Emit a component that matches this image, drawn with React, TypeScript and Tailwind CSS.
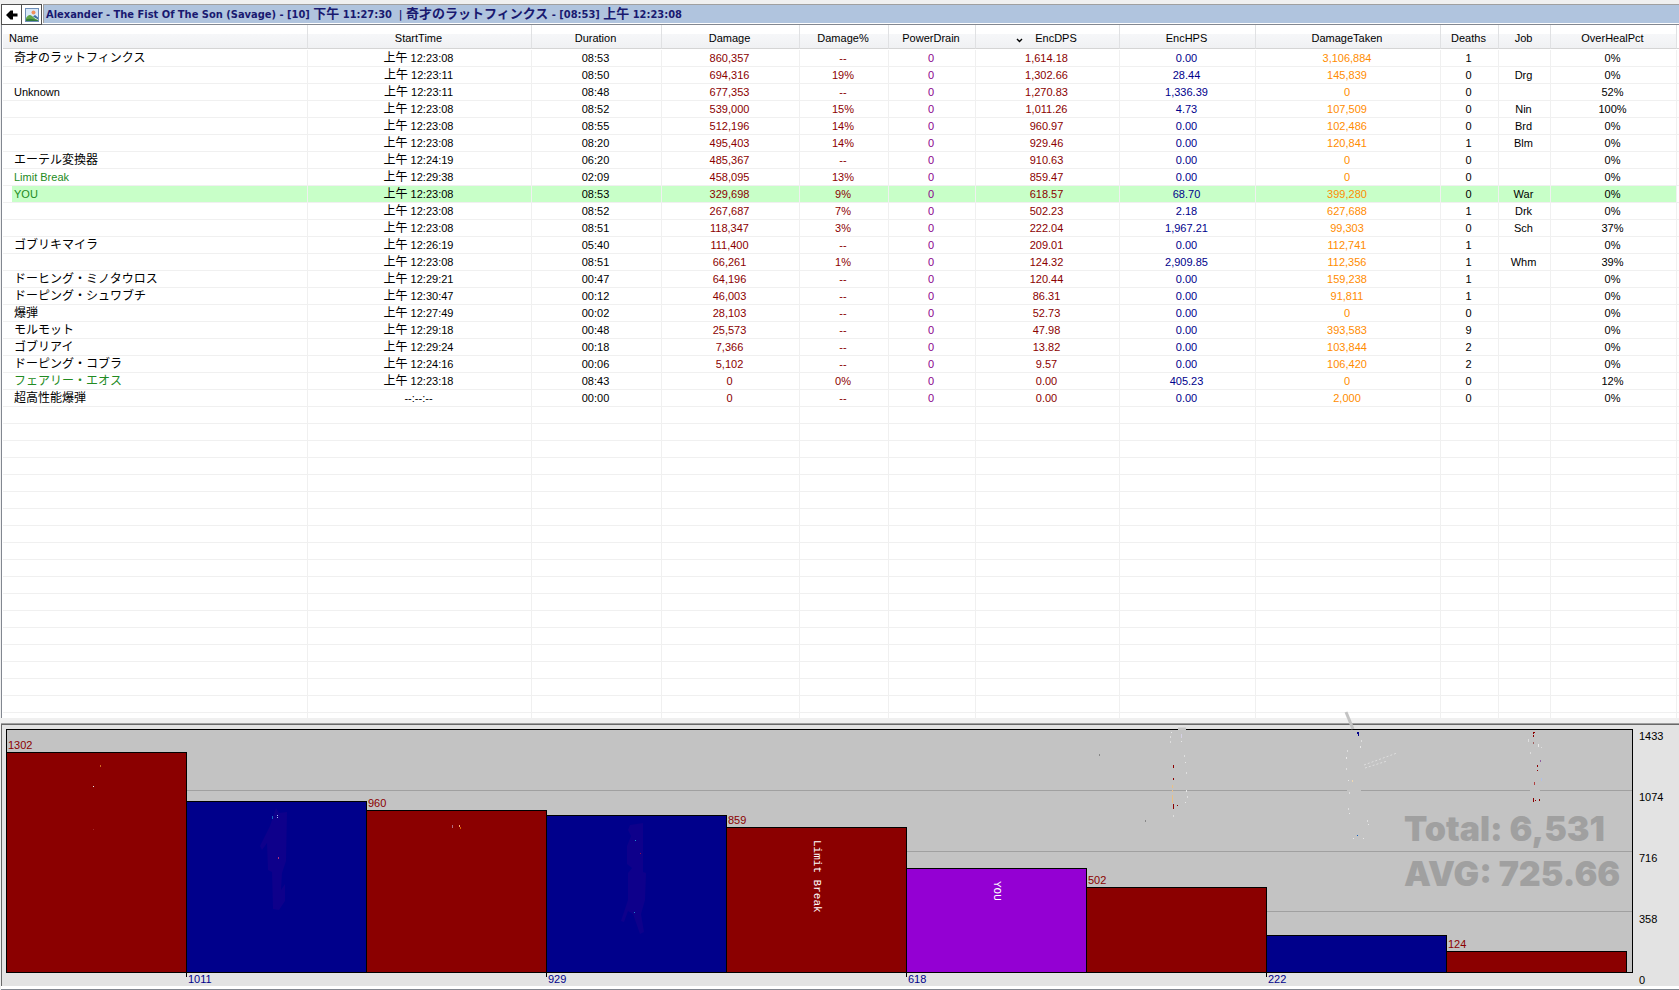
import React from "react";

type Row = {
  name: string;
  start: string;
  duration: string;
  damage: string;
  pct: string;
  dps: string;
  hps: string;
  taken: string;
  deaths: string;
  job: string;
  overheal: string;
  ally?: boolean;
  active?: boolean;
};

const raw: string[] = [
  "奇才のラットフィンクス|上午 12:23:08|08:53|860,357|--|1,614.18|0.00|3,106,884|1||0%",
  "|上午 12:23:11|08:50|694,316|19%|1,302.66|28.44|145,839|0|Drg|0%",
  "Unknown|上午 12:23:11|08:48|677,353|--|1,270.83|1,336.39|0|0||52%",
  "|上午 12:23:08|08:52|539,000|15%|1,011.26|4.73|107,509|0|Nin|100%",
  "|上午 12:23:08|08:55|512,196|14%|960.97|0.00|102,486|0|Brd|0%",
  "|上午 12:23:08|08:20|495,403|14%|929.46|0.00|120,841|1|Blm|0%",
  "エーテル変換器|上午 12:24:19|06:20|485,367|--|910.63|0.00|0|0||0%",
  "Limit Break|上午 12:29:38|02:09|458,095|13%|859.47|0.00|0|0||0%",
  "YOU|上午 12:23:08|08:53|329,698|9%|618.57|68.70|399,280|0|War|0%",
  "|上午 12:23:08|08:52|267,687|7%|502.23|2.18|627,688|1|Drk|0%",
  "|上午 12:23:08|08:51|118,347|3%|222.04|1,967.21|99,303|0|Sch|37%",
  "ゴブリキマイラ|上午 12:26:19|05:40|111,400|--|209.01|0.00|112,741|1||0%",
  "|上午 12:23:08|08:51|66,261|1%|124.32|2,909.85|112,356|1|Whm|39%",
  "ドーヒング・ミノタウロス|上午 12:29:21|00:47|64,196|--|120.44|0.00|159,238|1||0%",
  "ドーピング・シュワブチ|上午 12:30:47|00:12|46,003|--|86.31|0.00|91,811|1||0%",
  "爆弾|上午 12:27:49|00:02|28,103|--|52.73|0.00|0|0||0%",
  "モルモット|上午 12:29:18|00:48|25,573|--|47.98|0.00|393,583|9||0%",
  "ゴブリアイ|上午 12:29:24|00:18|7,366|--|13.82|0.00|103,844|2||0%",
  "ドーピング・コブラ|上午 12:24:16|00:06|5,102|--|9.57|0.00|106,420|2||0%",
  "フェアリー・エオス|上午 12:23:18|08:43|0|0%|0.00|405.23|0|0||12%",
  "超高性能爆弾|--:--:--|00:00|0|--|0.00|0.00|2,000|0||0%",
];

const allies = ["Limit Break", "YOU", "フェアリー・エオス"];

const rows: Row[] = raw.map((line) => {
  const [name, start, duration, damage, pct, dps, hps, taken, deaths, job, overheal] = line.split("|");
  return {
    name, start, duration, damage, pct, dps, hps, taken, deaths, job, overheal,
    ally: allies.includes(name),
    active: name === "YOU",
  };
});

const columns = [
  { label: "Name", width: "w-[305px]" },
  { label: "StartTime", width: "w-[224px]" },
  { label: "Duration", width: "w-[130px]" },
  { label: "Damage", width: "w-[138px]" },
  { label: "Damage%", width: "w-[89px]" },
  { label: "PowerDrain", width: "w-[87px]" },
  { label: "EncDPS", width: "w-[144px]", sorted: true },
  { label: "EncHPS", width: "w-[136px]" },
  { label: "DamageTaken", width: "w-[185px]" },
  { label: "Deaths", width: "w-[58px]" },
  { label: "Job", width: "w-[52px]" },
  { label: "OverHealPct", width: "w-[126px]" },
];

const emptyRows = Array.from({ length: 19 }, (_, i) => i);

/** Splits a string so that CJK runs are set in their own, slightly larger face. */
function Mixed({ text, size = "text-[12px]" }: { text: string; size?: string }) {
  const parts = text.split(/([\u3000-\u9fff]+)/);
  return (
    <>
      {parts.map((part, i) =>
        i % 2 === 1 ? (
          <span key={i} className={`font-['Noto_Sans_CJK_JP',sans-serif] leading-none ${size}`}>{part}</span>
        ) : (
          part
        ),
      )}
    </>
  );
}

function BackIcon() {
  return (
    <svg width="12" height="10" viewBox="0 0 12 10" aria-hidden="true">
      <path d="M0 5 L4.5 0.5 H7 V3.5 H11.5 V6.5 H7 V9.5 H4.5 Z" fill="#000" />
    </svg>
  );
}

function PictureIcon() {
  return (
    <svg width="14" height="14" viewBox="0 0 14 14" aria-hidden="true">
      <rect x="0.5" y="0.5" width="13" height="13" fill="#fff" stroke="#6f8fb8" />
      <rect x="1" y="1" width="12" height="9" fill="#d9e9fa" />
      <circle cx="8.5" cy="4.5" r="2" fill="#f0905a" />
      <path d="M1 10 C3 7 5 6 7 8 C9 10 11 11 13 12 V13 H1 Z" fill="#5fa548" />
      <path d="M1 11.5 C4 10 8 11 13 12.5 V13 H1 Z" fill="#2f7a3c" />
      <path d="M8 8.5 L10 7 L13 9.5 V11.5 Z" fill="#3d6f9f" />
    </svg>
  );
}

function Cell({ value, color, active }: { value: string; color: string; active?: boolean }) {
  return (
    <td className={`h-[17px] border-r border-b border-[#f0f0f0] p-0 pt-px pr-[2px] text-center ${color} ${active ? "bg-[#c8ffc8]" : ""}`}>
      <Mixed text={value} />
    </td>
  );
}

function CombatantTable() {
  return (
    <div className="min-h-0 flex-1 overflow-hidden border-l border-[#828790] bg-white pl-px">
      <table className="w-full table-fixed border-separate border-spacing-0 font-['Liberation_Sans','Noto_Sans_CJK_JP',sans-serif] text-[11px] leading-[15px] whitespace-nowrap text-black">
        <colgroup>
          {columns.map((c) => (
            <col key={c.label} className={c.width} />
          ))}
          <col className="w-[2px]" />
        </colgroup>
        <thead>
          <tr>
            {columns.map((c, i) => (
              <th key={c.label} scope="col" className="h-[25px] p-0 pb-px font-normal">
                <button
                  type="button"
                  className={`flex h-6 w-full items-center border-r border-b border-r-[#e0e1e3] border-b-[#d5d5d5] bg-linear-to-b from-white from-40% via-[#f6f7f9] via-40% to-[#f0f1f3] pt-[3px] pr-[2px] ${i === 0 ? "justify-start pl-[6px]" : "justify-center"}`}
                >
                  {c.sorted && (
                    <svg className="mt-1 mr-3" width="7" height="5" viewBox="0 0 7 5" aria-hidden="true">
                      <path d="M1 1 L3.5 3.5 L6 1" fill="none" stroke="#000" strokeWidth="1.4" />
                    </svg>
                  )}
                  {c.label}
                </button>
              </th>
            ))}
            <td className="p-0 pb-px">
              <div className="h-6 border-b border-[#d5d5d5]" />
            </td>
          </tr>
        </thead>
        <tbody>
          {rows.map((r, i) => (
            <tr key={i}>
              <td className="h-[17px] border-r border-b border-[#f0f0f0] p-0 pl-[9px]">
                <div className={`h-4 pt-px pl-[2px] ${r.active ? "bg-[#c8ffc8]" : ""} ${r.ally ? "text-[#228b22]" : ""}`}>
                  <Mixed text={r.name} />
                </div>
              </td>
              <Cell value={r.start} color="text-black" active={r.active} />
              <Cell value={r.duration} color="text-black" active={r.active} />
              <Cell value={r.damage} color="text-[#8b0000]" active={r.active} />
              <Cell value={r.pct} color="text-[#8b0000]" active={r.active} />
              <Cell value="0" color="text-[#8b008b]" active={r.active} />
              <Cell value={r.dps} color="text-[#8b0000]" active={r.active} />
              <Cell value={r.hps} color="text-[#00008b]" active={r.active} />
              <Cell value={r.taken} color="text-[#ff8c00]" active={r.active} />
              <Cell value={r.deaths} color="text-black" active={r.active} />
              <Cell value={r.job} color="text-black" active={r.active} />
              <Cell value={r.overheal} color="text-black" active={r.active} />
              <td className="border-b border-[#f0f0f0] p-0" />
            </tr>
          ))}
          {emptyRows.map((n) => (
            <tr key={`empty-${n}`}>
              {columns.map((c) => (
                <td key={c.label} className="h-[17px] border-r border-b border-[#f0f0f0] p-0" />
              ))}
              <td className="border-b border-[#f0f0f0] p-0" />
            </tr>
          ))}
        </tbody>
      </table>
    </div>
  );
}

type Bar = { value: number; color: string; label?: string; smudge?: string };

const MAX = 1433;

const bars: Bar[] = [
  { value: 1302, color: "bg-[#8b0000]" },
  {
    value: 1011,
    color: "bg-[#00008b]",
    smudge: "M89 6 L92 11 L100 10 L99 59 L95 71 L94 88 L98 82 L98 99 L92 108 L86 107 L85 70 L81 68 L80 41 L75 48 L73 44 L83 24 Z",
  },
  { value: 960, color: "bg-[#8b0000]" },
  {
    value: 929,
    color: "bg-[#00008b]",
    smudge: "M83 9 L96 7 L96 56 L99 57 L98 84 L94 98 L97 116 L93 118 L86 98 L81 95 L77 106 L74 105 L81 84 L81 57 L85 52 L80 48 L80 30 L84 20 L81 14 Z",
  },
  { value: 859, color: "bg-[#8b0000]", label: "Limit Break" },
  { value: 618, color: "bg-[#9400d3]", label: "YOU" },
  { value: 502, color: "bg-[#8b0000]" },
  { value: 222, color: "bg-[#00008b]" },
  { value: 124, color: "bg-[#8b0000]" },
];

/* x, y, height, colour of the stray marks, in plot coordinates */
const specks: [number, number, number, string][] = [
  [93, 35, 2, "#d2691e"], [86, 56, 1, "#e8e8e8"], [86, 99, 1, "#a52a2a"],
  [265, 86, 3, "#1565c0"], [270, 85, 1, "#9fb8f0"], [270, 87, 1, "#9fb8f0"], [271, 127, 2, "#b03080"],
  [445, 95, 3, "#b06a80"], [452, 95, 2, "#ffb070"], [453, 97, 2, "#e06000"],
  [628, 110, 1, "#2090d0"], [633, 123, 1, "#901050"], [627, 182, 1, "#2080d0"],
  [1092, 24, 2, "#888"], [1138, 90, 2, "#888"],
  [1166, 35, 3, "#8b0000"], [1166, 48, 2, "#8b0000"], [1165, 55, 3, "#e8c088"], [1165, 60, 2, "#e8c088"], [1165, 65, 8, "#e8c088"], [1166, 74, 5, "#8b0000"], [1170, 75, 1, "#8b0000"],
  [1164, 2, 1, "#e8e8e8"], [1163, 6, 2, "#dedede"], [1163, 11, 2, "#dedede"], [1174, 4, 4, "#d4d0e4"], [1174, 11, 1, "#e8e8e8"], [1177, 25, 2, "#dedede"], [1178, 32, 1, "#e8e8e8"], [1179, 42, 2, "#dedede"], [1179, 60, 2, "#e8e8e8"], [1180, 66, 2, "#dedede"], [1178, 72, 1, "#e8e8e8"], [1166, 85, 2, "#dedede"],
  [1350, 2, 2, "#00008b"], [1351, 2, 4, "#00008b"], [1354, 10, 2, "#dedede"], [1353, 16, 2, "#e8e8e8"], [1340, 20, 2, "#dedede"], [1339, 27, 2, "#e8e8e8"], [1339, 38, 2, "#dedede"], [1345, 50, 2, "#f0d8b0"],
  [1341, 50, 1, "#e8e8e8"], [1342, 62, 2, "#dedede"], [1341, 78, 2, "#dedede"], [1342, 83, 1, "#e8e8e8"], [1360, 90, 2, "#dedede"], [1361, 94, 1, "#e8e8e8"], [1350, 105, 1, "#1060c0"], [1346, 108, 1, "#e8e8e8"], [1356, 108, 1, "#e8e8e8"],
  [1526, 2, 2, "#8b0000"], [1527, 2, 1, "#8b0000"], [1526, 5, 2, "#8b0000"], [1526, 12, 2, "#a06060"], [1531, 14, 3, "#e8e8e8"], [1534, 17, 1, "#dedede"], [1521, 9, 3, "#dedede"], [1523, 22, 2, "#dedede"],
  [1533, 30, 2, "#9060a0"], [1530, 35, 2, "#8b0000"], [1530, 40, 1, "#8b0000"], [1534, 48, 3, "#b0c0e8"], [1527, 52, 3, "#b04040"], [1526, 68, 4, "#8b0000"], [1528, 70, 1, "#8b0000"], [1532, 69, 2, "#8b0000"],
];

function Marks() {
  return (
    <svg className="pointer-events-none absolute top-0 left-0 h-full w-full overflow-visible" aria-hidden="true">
      <path d="M1339 -18 L1346 -1" stroke="#c3c3c3" strokeWidth="3" fill="none" />
      <path d="M1171 -1 L1179 -1 M1340 60 H1354 M1523 60 H1533" stroke="#c3c3c3" strokeWidth="3" fill="none" />
      <path d="M1357 35 L1390 23 M1358 38 L1380 31" stroke="#dedede" strokeWidth="1" strokeDasharray="2 2" fill="none" />
      {specks.map(([x, y, h, color], i) => (
        <rect key={i} x={x} y={y} width="1" height={h} fill={color} />
      ))}
    </svg>
  );
}

function Chart() {
  return (
    <section
      aria-label="EncDPS graph"
      className="flex flex-none border-t border-l border-[#696969] bg-[#e3e3e3] pt-1 pl-1 font-['Liberation_Sans',sans-serif] text-[11px] leading-3"
    >
      <div className="relative mb-[13px] h-[244px] flex-1 border border-black bg-[#c3c3c3]">
        <div className="absolute inset-0 flex flex-col">
          <div className="flex-1 border-b border-[#a0a0a0]" />
          <div className="flex-1 border-b border-[#a0a0a0]" />
          <div className="flex-1 border-b border-[#a0a0a0]" />
          <div className="flex-1" />
        </div>
        <div className="absolute top-[76px] right-3 w-[216px] font-['Inter',sans-serif] text-[34px] leading-[45px] font-black whitespace-nowrap text-[#a0a0a0]">
          <p>Total: 6,531</p>
          <p>AVG: 725.66</p>
        </div>
        <div className="relative flex h-full items-end pr-[5px]">
          {bars.map((b, i) => (
            <div key={b.value} className="relative flex h-full flex-1 items-end">
              <div
                className={`relative flex w-full items-start justify-center border-t border-r border-black ${b.color}`}
                style={{ height: `${(b.value / MAX) * 100}%` }}
              >
                {i % 2 === 0 && <span className="absolute bottom-full left-px pb-[2px] text-[#8b0000]">{b.value}</span>}
                {b.smudge && (
                  <svg className="absolute top-0 left-0" width="120" height="125" aria-hidden="true">
                    <path d={b.smudge} fill="#0e008b" />
                  </svg>
                )}
                {b.label && (
                  <span className="pt-3 font-['Liberation_Mono',monospace] whitespace-nowrap text-white [writing-mode:vertical-rl]">
                    {b.label}
                  </span>
                )}
              </div>
              {i % 2 === 1 && (
                <span className="absolute top-full -left-px flex text-[#00008b]">
                  <span className="h-[5px] w-px bg-black" />
                  <span className="pt-px pl-px">{b.value}</span>
                </span>
              )}
            </div>
          ))}
        </div>
        <Marks />
      </div>
      <div className="flex w-[46px] flex-col justify-between pt-px pl-[6px] text-black">
        <span>1433</span>
        <span>1074</span>
        <span>716</span>
        <span>358</span>
        <span>0</span>
      </div>
    </section>
  );
}

export default function App() {
  return (
    <main className="flex h-screen flex-col overflow-hidden bg-[#f0f0f0] pt-1 pl-px">
      <header className="flex h-[21px] flex-none border-b border-[#828790] bg-white">
        <button type="button" aria-label="Back" className="flex h-[21px] w-[21px] items-center justify-center border border-[#505050] bg-white">
          <BackIcon />
        </button>
        <button type="button" aria-label="Show graph image" className="flex h-[21px] w-5 items-center justify-center border border-l-0 border-[#505050] bg-white">
          <PictureIcon />
        </button>
        <h1 className="mb-px ml-px flex-1 border-t border-l border-t-[#a0a0a0] border-l-[#a0a0a0] bg-[#b0c4de] pt-px pl-[2px] font-['DejaVu_Sans_Condensed','DejaVu_Sans','Noto_Sans_CJK_JP',sans-serif] text-[11px] leading-[17px] font-bold whitespace-pre text-[#191970]">
          <Mixed
            size="text-[13px]"
            text="Alexander - The Fist Of The Son (Savage) - [10] 下午 11:27:30  | 奇才のラットフィンクス - [08:53] 上午 12:23:08"
          />
        </h1>
      </header>
      <CombatantTable />
      <div className="h-[6px] flex-none border-b border-[#a0a0a0]" />
      <Chart />
      <footer className="h-1 flex-none border-b border-[#828790] bg-white" />
    </main>
  );
}
